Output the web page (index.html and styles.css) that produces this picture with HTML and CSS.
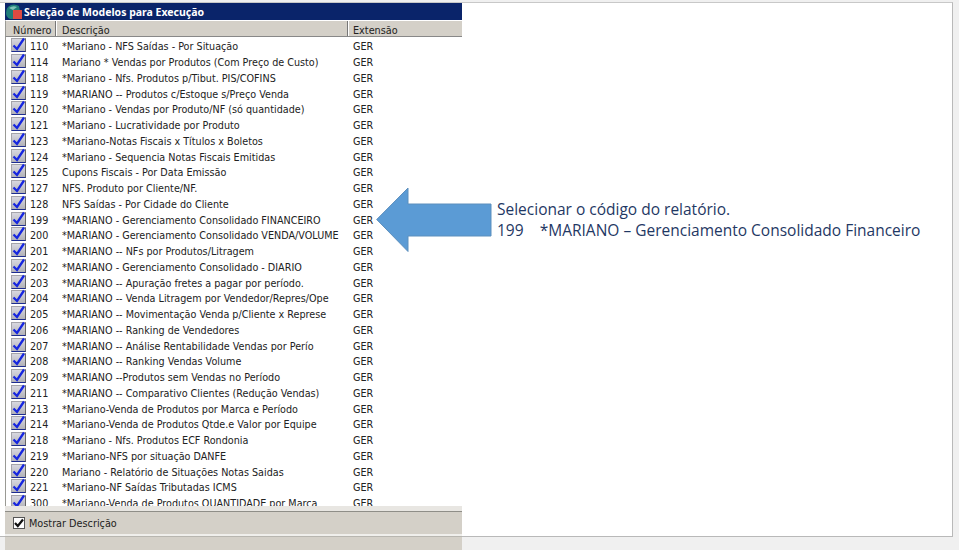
FILE: index.html
```html
<!DOCTYPE html>
<html lang="pt">
<head>
<meta charset="utf-8">
<title>Seleção de Modelos para Execução</title>
<link rel="stylesheet" href="styles.css">
</head>
<body>
<svg class="defs" width="0" height="0"><symbol id="tick" viewBox="0 0 15 15"><path d="M2.5 8.500L6 12 13 1.500" fill="none" stroke="#1626e0" stroke-width="2.300"/></symbol></svg>
<main class="sheet">
  <section class="win">
    <header class="title">
      <svg class="appicon" width="16" height="16" viewBox="0 0 16 16"><path d="M0 9Q0 3 5 1q4-1.500 8 1l1 5H8v8H4Q0 13 0 9z" fill="#1f7d78"/><path d="M3 4q4-3 8-1L7 6z" fill="#7fc4b8"/><rect x="7" y="6" width="9" height="9" fill="#de4a42"/></svg>
      <span>Seleção de Modelos para Execução</span>
    </header>
    <div class="cols">
      <div class="col c-num">Número</div>
      <div class="col c-desc">Descrição</div>
      <div class="col c-ext">Extensão</div>
    </div>
    <div class="rows">
      <div class="row"><span class="box"><svg class="tick"><use href="#tick"/></svg></span><span class="num">110</span><span class="desc">*Mariano - NFS Saídas - Por Situação</span><span class="ext">GER</span></div>
      <div class="row"><span class="box"><svg class="tick"><use href="#tick"/></svg></span><span class="num">114</span><span class="desc">Mariano * Vendas por Produtos (Com Preço de Custo)</span><span class="ext">GER</span></div>
      <div class="row"><span class="box"><svg class="tick"><use href="#tick"/></svg></span><span class="num">118</span><span class="desc">*Mariano - Nfs. Produtos p/Tibut. PIS/COFINS</span><span class="ext">GER</span></div>
      <div class="row"><span class="box"><svg class="tick"><use href="#tick"/></svg></span><span class="num">119</span><span class="desc">*MARIANO -- Produtos c/Estoque s/Preço Venda</span><span class="ext">GER</span></div>
      <div class="row"><span class="box"><svg class="tick"><use href="#tick"/></svg></span><span class="num">120</span><span class="desc">*Mariano - Vendas por Produto/NF (só quantidade)</span><span class="ext">GER</span></div>
      <div class="row"><span class="box"><svg class="tick"><use href="#tick"/></svg></span><span class="num">121</span><span class="desc">*Mariano - Lucratividade por Produto</span><span class="ext">GER</span></div>
      <div class="row"><span class="box"><svg class="tick"><use href="#tick"/></svg></span><span class="num">123</span><span class="desc">*Mariano-Notas Fiscais x Títulos x Boletos</span><span class="ext">GER</span></div>
      <div class="row"><span class="box"><svg class="tick"><use href="#tick"/></svg></span><span class="num">124</span><span class="desc">*Mariano - Sequencia Notas Fiscais Emitidas</span><span class="ext">GER</span></div>
      <div class="row"><span class="box"><svg class="tick"><use href="#tick"/></svg></span><span class="num">125</span><span class="desc">Cupons Fiscais - Por Data Emissão</span><span class="ext">GER</span></div>
      <div class="row"><span class="box"><svg class="tick"><use href="#tick"/></svg></span><span class="num">127</span><span class="desc">NFS. Produto por Cliente/NF.</span><span class="ext">GER</span></div>
      <div class="row"><span class="box"><svg class="tick"><use href="#tick"/></svg></span><span class="num">128</span><span class="desc">NFS Saídas - Por Cidade do Cliente</span><span class="ext">GER</span></div>
      <div class="row"><span class="box"><svg class="tick"><use href="#tick"/></svg></span><span class="num">199</span><span class="desc">*MARIANO - Gerenciamento Consolidado FINANCEIRO</span><span class="ext">GER</span></div>
      <div class="row"><span class="box"><svg class="tick"><use href="#tick"/></svg></span><span class="num">200</span><span class="desc">*MARIANO - Gerenciamento Consolidado VENDA/VOLUME</span><span class="ext">GER</span></div>
      <div class="row"><span class="box"><svg class="tick"><use href="#tick"/></svg></span><span class="num">201</span><span class="desc">*MARIANO -- NFs por Produtos/Litragem</span><span class="ext">GER</span></div>
      <div class="row"><span class="box"><svg class="tick"><use href="#tick"/></svg></span><span class="num">202</span><span class="desc">*MARIANO - Gerenciamento Consolidado - DIARIO</span><span class="ext">GER</span></div>
      <div class="row"><span class="box"><svg class="tick"><use href="#tick"/></svg></span><span class="num">203</span><span class="desc">*MARIANO -- Apuração fretes a pagar por período.</span><span class="ext">GER</span></div>
      <div class="row"><span class="box"><svg class="tick"><use href="#tick"/></svg></span><span class="num">204</span><span class="desc">*MARIANO -- Venda Litragem por Vendedor/Repres/Ope</span><span class="ext">GER</span></div>
      <div class="row"><span class="box"><svg class="tick"><use href="#tick"/></svg></span><span class="num">205</span><span class="desc">*MARIANO -- Movimentação Venda p/Cliente x Represe</span><span class="ext">GER</span></div>
      <div class="row"><span class="box"><svg class="tick"><use href="#tick"/></svg></span><span class="num">206</span><span class="desc">*MARIANO -- Ranking de Vendedores</span><span class="ext">GER</span></div>
      <div class="row"><span class="box"><svg class="tick"><use href="#tick"/></svg></span><span class="num">207</span><span class="desc">*MARIANO -- Análise Rentabilidade Vendas por Perío</span><span class="ext">GER</span></div>
      <div class="row"><span class="box"><svg class="tick"><use href="#tick"/></svg></span><span class="num">208</span><span class="desc">*MARIANO -- Ranking Vendas Volume</span><span class="ext">GER</span></div>
      <div class="row"><span class="box"><svg class="tick"><use href="#tick"/></svg></span><span class="num">209</span><span class="desc">*MARIANO --Produtos sem Vendas no Período</span><span class="ext">GER</span></div>
      <div class="row"><span class="box"><svg class="tick"><use href="#tick"/></svg></span><span class="num">211</span><span class="desc">*MARIANO -- Comparativo Clientes (Redução Vendas)</span><span class="ext">GER</span></div>
      <div class="row"><span class="box"><svg class="tick"><use href="#tick"/></svg></span><span class="num">213</span><span class="desc">*Mariano-Venda de Produtos por Marca e Período</span><span class="ext">GER</span></div>
      <div class="row"><span class="box"><svg class="tick"><use href="#tick"/></svg></span><span class="num">214</span><span class="desc">*Mariano-Venda de Produtos Qtde.e Valor por Equipe</span><span class="ext">GER</span></div>
      <div class="row"><span class="box"><svg class="tick"><use href="#tick"/></svg></span><span class="num">218</span><span class="desc">*Mariano - Nfs. Produtos ECF Rondonia</span><span class="ext">GER</span></div>
      <div class="row"><span class="box"><svg class="tick"><use href="#tick"/></svg></span><span class="num">219</span><span class="desc">*Mariano-NFS por situação DANFE</span><span class="ext">GER</span></div>
      <div class="row"><span class="box"><svg class="tick"><use href="#tick"/></svg></span><span class="num">220</span><span class="desc">Mariano - Relatório de Situações Notas Saidas</span><span class="ext">GER</span></div>
      <div class="row"><span class="box"><svg class="tick"><use href="#tick"/></svg></span><span class="num">221</span><span class="desc">*Mariano-NF Saídas Tributadas ICMS</span><span class="ext">GER</span></div>
      <div class="row"><span class="box"><svg class="tick"><use href="#tick"/></svg></span><span class="num">300</span><span class="desc">*Mariano-Venda de Produtos QUANTIDADE por Marca</span><span class="ext">GER</span></div>
    </div>
    <footer class="foot">
      <span class="chk"><svg width="10" height="10" viewBox="0 0 10 10"><path d="M1 5l2.800 3L9 1.500" fill="none" stroke="#111" stroke-width="2.200"/></svg></span>
      <span>Mostrar Descrição</span>
    </footer>
    <div class="foot2"></div>
  </section>
  <aside class="note">
    <svg class="arrow" width="116" height="66" viewBox="0 0 116 66"><path d="M.7 32.500L32 1v16h83v32H32v15.500z" fill="#5b9bd5" stroke="#5d8fbd"/></svg>
    <p class="msg">Selecionar o código do relatório.<br>199&nbsp;&nbsp;&nbsp; *MARIANO – Gerenciamento Consolidado Financeiro</p>
  </aside>
</main>
</body>
</html>
```
FILE: styles.css
```css
* { box-sizing: border-box; }
html, body { margin: 0; height: 100%; }
body { width: 959px; height: 550px; background: #f0f0f0; overflow: hidden; font-family: "DejaVu Sans", sans-serif; }
.defs { position: absolute; }
.sheet { width: 953px; height: 535px; background: #fff; border-right: 1px solid #b9b9b9; border-bottom: 1px solid #b9b9b9; border-top: 1px solid #c8c8c8; margin-top: 2px; padding-left: 5px; display: flex; align-items: flex-start; }
.win { width: 457px; height: 547px; display: flex; flex-direction: column; flex: none; background: #d4d0c8; }
.title { height: 17px; background: #0a246a; color: #fff; font: bold 10.5px "Noto Sans", sans-serif; display: flex; align-items: center; gap: 2px; flex: none; padding-left: 1px; }
.appicon { flex: none; }
.cols { height: 17px; display: flex; flex: none; background: #d4d0c8; font: 9.7px "DejaVu Sans", sans-serif; color: #222; border-top: 1px solid #fff; border-bottom: 1px solid #888; border-left: 1px solid #9a9a94; overflow: hidden; }
.col { line-height: 20px; border-right: 1px solid #777; box-shadow: 1px 0 0 #fff; }
.c-num { width: 50px; padding-left: 7px; }
.c-desc { width: 292px; padding-left: 6px; }
.c-ext { flex: 1; border-right: 0; padding-left: 5px; box-shadow: none; }
.rows { height: 469px; padding-top: 2px; overflow: hidden; flex: none; background: #fff; border-left: 1px solid #9a9a94; }
.row { height: 15.76px; display: flex; align-items: center; font: 9.65px "DejaVu Sans", sans-serif; color: #222; white-space: nowrap; }
.box { position: relative; width: 15px; height: 14px; margin: 0 0 3px 5px; background: linear-gradient(#d8d8e0, #b2b2b8); border: 1px solid #a4a4aa; border-right-color: #666; border-bottom-color: #1c2c90; flex: none; }
.tick { position: absolute; left: -1px; top: -2px; width: 15px; height: 15px; }
.num { width: 36px; padding-left: 4px; flex: none; }
.desc { width: 291px; flex: none; overflow: hidden; }
.ext { flex: none; }
.foot { height: 30px; flex: none; background: #d4d0c8; border-top: 5px solid #e8e6e2; border-bottom: 2px solid #f0efec; display: flex; align-items: center; gap: 4px; padding: 1px 0 0 8px; font: 9.7px "DejaVu Sans", sans-serif; color: #222; box-shadow: inset 0 1px 0 #8f8e88; }
.chk { width: 12px; height: 12px; background: #fff; border: 1px solid #555; display: flex; align-items: center; justify-content: center; }
.foot2 { flex: 1; background: #d4d0c8; border-top: 1px solid #b8b6b0; }
.note { position: relative; flex: 1; }
.arrow { position: absolute; left: -86px; top: 184px; }
.msg { position: absolute; left: 35px; top: 196px; margin: 0; font: 15.5px/20.5px "Open Sans", sans-serif; color: #1f3864; white-space: nowrap; }
```
